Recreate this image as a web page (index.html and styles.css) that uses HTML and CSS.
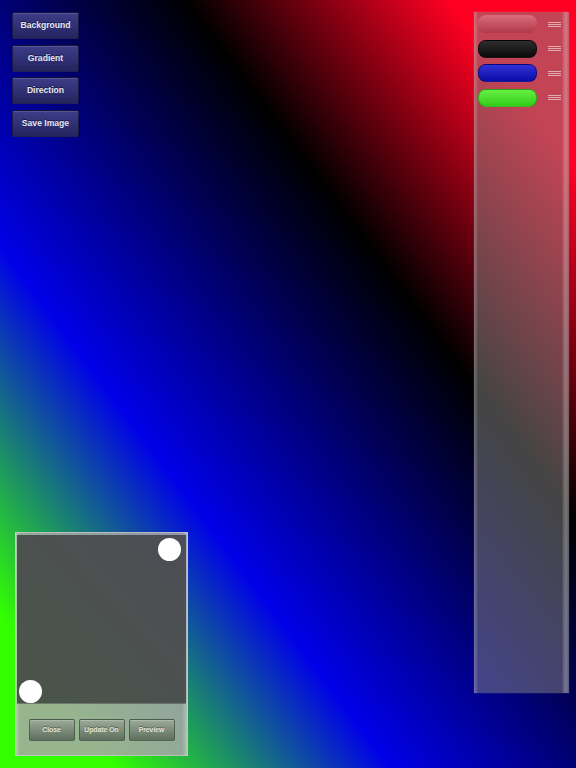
FILE: index.html
```html
<!DOCTYPE html>
<html lang="en">
<head>
    <meta charset="UTF-8">
    <title>Gradient</title>
    <link rel="stylesheet" href="styles.css">
</head>
<body>
<div class="screen">
    <div class="side">
        <ul class="menu">
            <li><a href="javascript:;" class="btn">Background</a></li>
            <li><a href="javascript:;" class="btn">Gradient</a></li>
            <li><a href="javascript:;" class="btn">Direction</a></li>
            <li><a href="javascript:;" class="btn">Save Image</a></li>
        </ul>

        <div class="editor">
            <div class="pad">
                <span class="knob knob-end"></span>
                <span class="knob knob-start"></span>
            </div>
            <div class="actions">
                <a href="javascript:;" class="tool">Close</a>
                <a href="javascript:;" class="tool">Update On</a>
                <a href="javascript:;" class="tool">Preview</a>
            </div>
        </div>
    </div>

    <div class="stops">
        <div class="stop">
            <span class="swatch red"></span>
            <span class="grip"><i></i><i></i><i></i></span>
        </div>
        <div class="stop">
            <span class="swatch black"></span>
            <span class="grip"><i></i><i></i><i></i></span>
        </div>
        <div class="stop">
            <span class="swatch blue"></span>
            <span class="grip"><i></i><i></i><i></i></span>
        </div>
        <div class="stop">
            <span class="swatch green"></span>
            <span class="grip"><i></i><i></i><i></i></span>
        </div>
    </div>
</div>
</body>
</html>
```

FILE: styles.css
```css
html, body {
    margin: 0;
    padding: 0;
}

a {
    text-decoration: none;
}

ul {
    list-style: none;
    padding: 0;
    margin: 0;
}

.screen {
    display: flex;
    justify-content: space-between;
    box-sizing: border-box;
    width: 576px;
    height: 768px;
    padding: 12px 7px 12px 12px;
    background: linear-gradient(to top right, #33ff00 10%, #0000e8 34%, #000000 66%, #ff0022 89%);
    font-family: "Liberation Sans", Arial, sans-serif;
    overflow: hidden;
}

.side {
    display: flex;
    flex-direction: column;
    justify-content: space-between;
}

/* left menu */
.menu {
    display: flex;
    flex-direction: column;
    gap: 5.5px;
}

.menu .btn {
    display: block;
    box-sizing: border-box;
    width: 67px;
    height: 27px;
    line-height: 25px;
    text-align: center;
    font-size: 8.6px;
    font-weight: bold;
    color: #e8e8f2;
    text-shadow: 0 -1px 0 rgba(0, 0, 30, 0.6);
    background: linear-gradient(#3d3d8a, #24245f);
    border: 1px solid rgba(0, 0, 20, 0.45);
    border-radius: 2px;
    box-shadow: inset 0 1px 0 rgba(255, 255, 255, 0.12);
}

/* gradient editor */
.editor {
    position: relative;
    box-sizing: border-box;
    width: 173px;
    height: 224px;
    margin-left: 3px;
    padding: 2px 1px 0 1px;
    background: linear-gradient(to right, rgba(200, 200, 200, 0.85), rgba(167, 167, 167, 0.85) 4px, rgba(167, 167, 167, 0.85) calc(100% - 5px), rgba(200, 200, 200, 0.85));
    border: 1px solid rgba(210, 210, 210, 0.6);
}

.editor .pad {
    position: relative;
    height: 168px;
    background: linear-gradient(to top right, rgba(66, 74, 66, 0.9), rgba(70, 70, 76, 0.9));
    box-shadow: 0 1px 0 rgba(40, 40, 40, 0.4);
}

.knob {
    position: absolute;
    width: 23px;
    height: 23px;
    border-radius: 50%;
    background: #fff;
}

.knob-end {
    right: 5px;
    top: 3px;
}

.knob-start {
    left: 2px;
    bottom: 0;
}

.actions {
    display: flex;
    justify-content: center;
    align-items: center;
    gap: 4px;
    height: 53px;
}

.actions .tool {
    box-sizing: border-box;
    width: 46px;
    height: 22px;
    line-height: 20px;
    text-align: center;
    font-size: 6.8px;
    font-weight: bold;
    color: #e2e8e2;
    text-shadow: 0 -1px 0 rgba(30, 40, 30, 0.5);
    background: linear-gradient(#9aab97, #5f6f5e);
    border: 1px solid rgba(70, 85, 70, 0.8);
    border-radius: 2px;
    box-shadow: inset 0 1px 0 rgba(255, 255, 255, 0.2);
}

/* colour stops list */
.stops {
    display: flex;
    flex-direction: column;
    gap: 6.5px;
    box-sizing: border-box;
    width: 95px;
    height: 681px;
    padding: 3px 0 0 4px;
    background:
        linear-gradient(to right,
            rgba(255, 255, 255, 0.22) 0,
            rgba(255, 255, 255, 0.1) 3px,
            rgba(255, 255, 255, 0) 4px,
            rgba(255, 255, 255, 0) calc(100% - 7px),
            rgba(255, 255, 255, 0.12) calc(100% - 6px),
            rgba(255, 255, 255, 0.28) calc(100% - 3px),
            rgba(255, 255, 255, 0.1) 100%),
        rgba(136, 136, 136, 0.5);
    box-shadow: 0 0 1px rgba(255, 255, 255, 0.3);
}

.stop {
    display: flex;
    align-items: center;
    gap: 11px;
    height: 18px;
}

.swatch {
    display: block;
    width: 59px;
    height: 18px;
    border-radius: 8px;
    box-sizing: border-box;
}

.swatch.red {
    background: linear-gradient(rgba(255, 170, 180, 0.4), rgba(120, 20, 40, 0.25));
}

.swatch.black {
    background: linear-gradient(#2e2e2e, #0a0a0a);
    border: 1px solid rgba(0, 0, 0, 0.5);
}

.swatch.blue {
    background: linear-gradient(#3333d6, #0b0ba8);
    border: 1px solid rgba(0, 0, 80, 0.5);
}

.swatch.green {
    background: linear-gradient(#66f044, #33cc18);
    border: 1px solid rgba(20, 90, 10, 0.4);
}

.grip {
    display: flex;
    flex-direction: column;
    gap: 1px;
    width: 13px;
}

.grip i {
    display: block;
    height: 1px;
    background: rgba(255, 255, 255, 0.55);
}
```
